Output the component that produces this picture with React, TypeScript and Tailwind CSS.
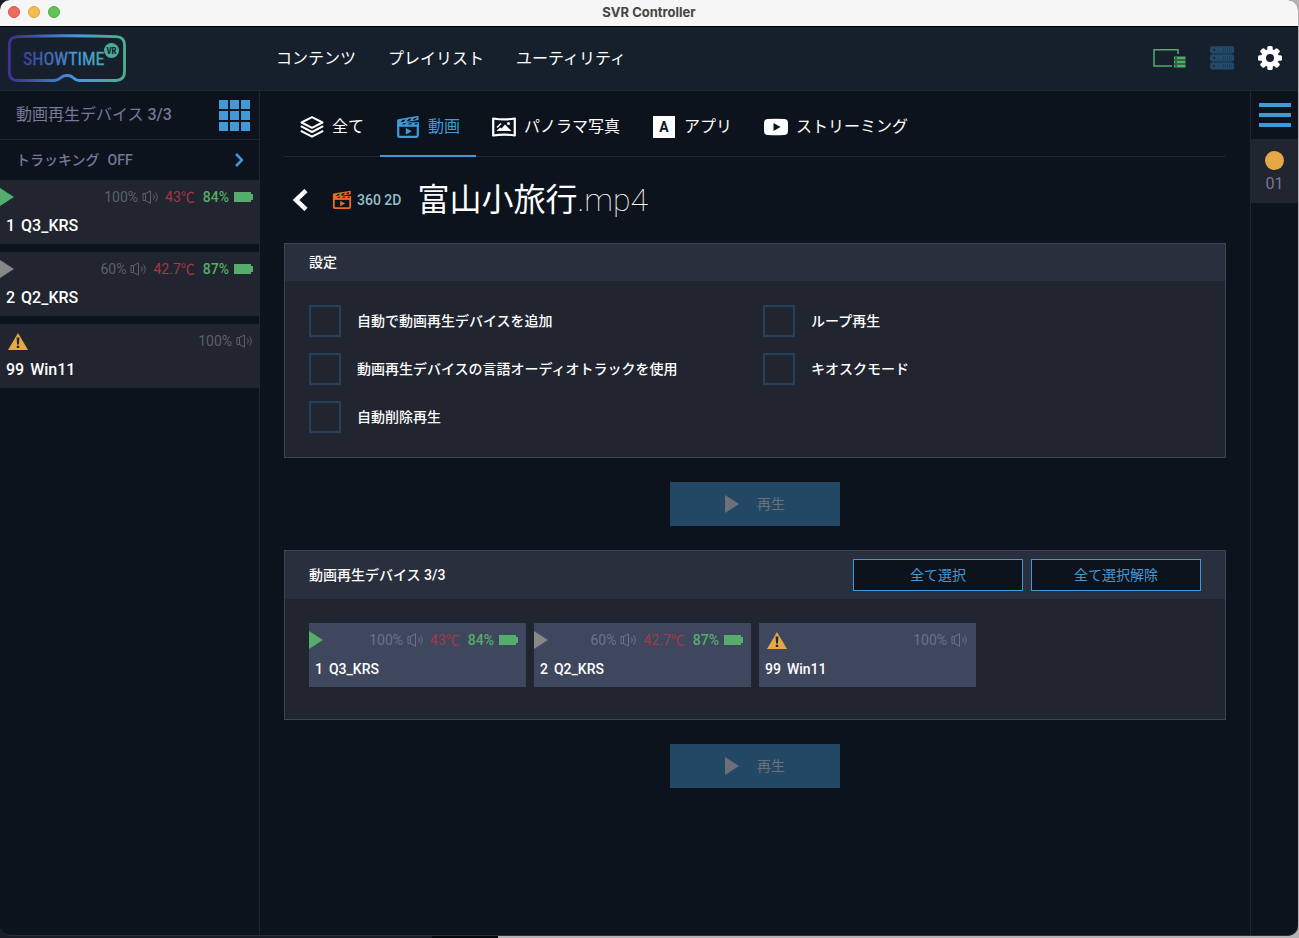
import { ReactNode } from "react";
import { clsx } from "clsx";

type IconProps = { className?: string };

const Logo = () => (
  <svg viewBox="0 0 120 50" className="h-[50px] w-[120px]" role="img" aria-label="Showtime VR">
    <defs>
      <linearGradient id="logo" gradientUnits="userSpaceOnUse" x1="0" y1="0" x2="120" y2="0">
        <stop offset="0" stopColor="#3f2f92" />
        <stop offset="0.16" stopColor="#41439f" />
        <stop offset="0.6" stopColor="#479bdb" />
        <stop offset="0.85" stopColor="#4ba99b" />
        <stop offset="1" stopColor="#4fb08c" />
      </linearGradient>
    </defs>
    <path
      d="M12 2.700 Q60 .8 110 2.700 Q118.500 3 118.500 11 V38 Q118.500 46 110 46.500 H73 C67 46.500 68 41.500 62 41.500 H60 C54 41.500 55 46.500 48 46.500 H12 Q3.300 46.500 3.300 38 V11 Q3.300 3 12 2.700 Z"
      fill="none"
      stroke="url(#logo)"
      strokeWidth="2.800"
      strokeLinejoin="round"
    />
    <text
      x="17"
      y="31"
      fontSize="18"
      fill="url(#logo)"
      stroke="url(#logo)"
      strokeWidth="0.3"
      className="font-['Roboto_Condensed','Liberation_Sans_Narrow',sans-serif]"
    >
      SHOWTIME
    </text>
    <circle cx="105.500" cy="16.500" r="7.500" fill="url(#logo)" />
    <text
      x="105.500"
      y="20"
      fontSize="9"
      textAnchor="middle"
      fill="#161f2c"
      className="font-['Roboto_Condensed','Liberation_Sans_Narrow',sans-serif] font-bold"
    >
      VR
    </text>
  </svg>
);

const LayersIcon = () => (
  <svg viewBox="0 0 24 24" className="size-6" fill="none" stroke="currentColor" strokeWidth="2" strokeLinejoin="round">
    <path d="M12 2.200 22.500 7.500 12 12.800 1.500 7.500Z" />
    <path d="M.8 11.200 12 17 23.200 11.200M.8 15.800 12 21.700 23.200 15.800" />
  </svg>
);

const ClapperIcon = ({ className }: IconProps) => (
  <svg viewBox="0 0 24 24" className={className}>
    <path
      d="M2.200 10.500H21.800V20.500Q21.800 21.800 20.500 21.800H3.500Q2.200 21.800 2.200 20.500Z"
      fill="none"
      stroke="currentColor"
      strokeWidth="2.200"
    />
    <path
      d="M1.100 5.500Q1.100 4.500 2 4.300L22.500 .8V5L9 7.300H22.900V11.500H1.100ZM6.500 5 4.500 7.300 7.800 6.700 9.800 4.400ZM12.500 4 10.500 6.200 13.800 5.700 15.800 3.400ZM18.300 3 16.500 5.100 19.600 4.600 21.200 2.500ZM7 8.200 5.500 10.500H8.700L10.200 8.200ZM13 8.200 11.500 10.500H14.700L16.200 8.200ZM19 8.200 17.500 10.500H20.700L21.800 8.200Z"
      fill="currentColor"
      fillRule="evenodd"
    />
    <path d="M9.800 13 15.800 16.300 9.800 19.600Z" fill="currentColor" />
  </svg>
);

const PhotoIcon = () => (
  <svg viewBox="0 0 24 24" className="size-6">
    <path
      d="M1.200 3.500Q12 5.200 22.800 3.500V20.500Q12 18.800 1.200 20.500Z"
      fill="none"
      stroke="currentColor"
      strokeWidth="2.200"
      strokeLinejoin="round"
    />
    <path d="M4.500 16 8 12.500 9.500 13.500 13 9.500 19.500 16Z" fill="currentColor" />
    <path d="M5 12.500 9 8.500" stroke="currentColor" strokeWidth="1.500" />
    <circle cx="16.500" cy="8.500" r="1.500" fill="currentColor" />
  </svg>
);

const AppIcon = () => (
  <span className="flex size-6 items-center justify-center">
    <span className="flex size-[22px] items-center justify-center bg-white text-sm leading-4 font-bold text-[#0c131c]">
      A
    </span>
  </span>
);

const StreamIcon = () => (
  <svg viewBox="0 0 24 24" className="size-6">
    <path
      fill="currentColor"
      fillRule="evenodd"
      d="M4 4Q12 3.400 20 4Q24 4.200 24 8V16Q24 19.800 20 20Q12 20.600 4 20Q0 19.800 0 16V8Q0 4.200 4 4ZM9.500 8V16L16.500 12Z"
    />
  </svg>
);

const PlayIcon = ({ className }: IconProps) => (
  <svg viewBox="0 0 14 18" className={clsx("h-[18px] w-[14px]", className)}>
    <path d="M0 0 14 9 0 18Z" fill="currentColor" />
  </svg>
);

const WarningIcon = () => (
  <svg viewBox="0 0 20 17" className="ml-2 h-[17px] w-5">
    <path d="M10 0 20 17H0Z" fill="#e5a847" />
    <path d="M8.600 4.500H11.400L10.900 11.500H9.100ZM8.800 12.700H11.200V15H8.800Z" fill="#20252f" />
  </svg>
);

const SpeakerIcon = () => (
  <svg viewBox="0 0 17 14" className="ml-1 h-[14px] w-[17px]" fill="none" stroke="currentColor">
    <path d="M1 3.500H3.500V10.500H1ZM3.500 3.500 8.500 .8V13.200L3.500 10.500" />
    <path d="M11.500 4.500Q13.200 7 11.500 9.500M13.500 2.500Q17 7 13.500 11.500" />
  </svg>
);

const BatteryIcon = () => (
  <svg viewBox="0 0 19 10" className="ml-[5px] h-[10px] w-[19px]">
    <path d="M0 0H17V2H19V8H17V10H0Z" fill="currentColor" />
  </svg>
);

const GridIcon = () => (
  <span className="grid grid-cols-3 gap-[2px]">
    {Array.from({ length: 9 }, (_, i) => (
      <span key={i} className="size-[9px] bg-[#4299d8]" />
    ))}
  </span>
);

const ScreenIcon = () => (
  <svg viewBox="0 0 33 24" className="h-6 w-[33px]" stroke="#4fae68" fill="none">
    <path d="M25 8V3.700H1V20H19" strokeWidth="1.500" />
    <path d="M21 10.500H32.500V13.500H21ZM21 14.500H32.500V17.500H21ZM21 18.500H32.500V21.500H21Z" fill="#4fae68" stroke="none" />
    <path d="M22 12H24M22 16H24M22 20H24" stroke="#161f2c" />
  </svg>
);

const ServerIcon = () => (
  <svg viewBox="0 0 24 24" className="size-6">
    {[0, 8, 16].map((y) => (
      <g key={y}>
        <rect y={y + 0.3} width="24" height="7.200" rx="2" fill="#244a6b" />
        <circle cx="4" cy={y + 4} r="1" fill="#161f2c" />
        <path d={`M13 ${y + 4}H22`} stroke="#1d3a56" strokeWidth="3" strokeDasharray="1 1" />
      </g>
    ))}
  </svg>
);

const GearIcon = () => (
  <svg viewBox="0 0 24 24" className="size-6">
    <circle cx="12" cy="12" r="6.500" fill="none" stroke="#fff" strokeWidth="5" />
    {[0, 45, 90, 135].map((deg) => (
      <g key={deg} transform={`rotate(${deg} 12 12)`} fill="#fff">
        <rect x="9.300" width="5.400" height="6" rx="1.500" />
        <rect x="9.300" y="18" width="5.400" height="6" rx="1.500" />
      </g>
    ))}
  </svg>
);

type Device = {
  id: number;
  name: string;
  volume: string;
  status: "playing" | "idle" | "warning";
  temperature?: string;
  battery?: string;
};

const devices: Device[] = [
  { id: 1, name: "Q3_KRS", volume: "100%", status: "playing", temperature: "43℃", battery: "84%" },
  { id: 2, name: "Q2_KRS", volume: "60%", status: "idle", temperature: "42.7℃", battery: "87%" },
  { id: 99, name: "Win11", volume: "100%", status: "warning" },
];

const DeviceTile = ({ device, card }: { device: Device; card?: boolean }) => (
  <li className={clsx("pt-1 pb-1.5", card ? "bg-[#3e475d]" : "bg-[#20252f]")}>
    <div className={clsx("flex h-[26px] items-center text-sm", card ? "pr-2" : "pr-1.5")}>
      {device.status === "warning" ? (
        <WarningIcon />
      ) : (
        <PlayIcon className={device.status === "playing" ? "text-[#54ad6a]" : "text-[#878787]"} />
      )}
      <span className={clsx("ml-auto flex items-center", card ? "text-[#6e7486]" : "text-[#5c606b]")}>
        {device.volume}
        <SpeakerIcon />
      </span>
      {device.temperature && <span className="ml-1.5 text-[#a83645]">{device.temperature}</span>}
      {device.battery && (
        <span className="ml-2 flex items-center font-medium text-[#54ad6a]">
          {device.battery}
          <BatteryIcon />
        </span>
      )}
    </div>
    <div className={clsx("mt-1 flex gap-1.5 pl-1.5 font-medium", card ? "text-sm leading-6" : "text-base leading-6")}>
      <span>{device.id}</span>
      <span>{device.name}</span>
    </div>
  </li>
);

const Sidebar = () => (
  <aside className="w-[260px] shrink-0 border-r border-[#20262f]">
    <div className="flex h-[49px] items-center justify-between border-b border-[#20262f] pr-[9px] pl-4 text-[#77779a]">
      <h2>
        動画再生デバイス <span className="font-medium">3/3</span>
      </h2>
      <button aria-label="グリッド表示">
        <GridIcon />
      </button>
    </div>
    <button className="flex h-10 w-full items-center justify-between px-4 text-sm font-medium text-[#77779a]">
      <span className="flex gap-2">
        <span>トラッキング</span>
        <span>OFF</span>
      </span>
      <svg viewBox="0 0 8 14" className="h-[14px] w-2" fill="none" stroke="#4299d8" strokeWidth="2.500">
        <path d="M1 1 7 7 1 13" />
      </svg>
    </button>
    <ul className="space-y-2">
      {devices.map((device) => (
        <DeviceTile key={device.id} device={device} />
      ))}
    </ul>
  </aside>
);

type TabProps = { icon: ReactNode; label: string; active?: boolean };

const Tab = ({ icon, label, active }: TabProps) => (
  <button
    role="tab"
    aria-selected={!!active}
    className={clsx(
      "-mb-px flex items-center gap-2 border-b-2 p-4",
      active ? "border-[#4299d8] text-[#4299d8]" : "border-transparent",
    )}
  >
    {icon}
    {label}
  </button>
);

const Option = ({ label }: { label: string }) => (
  <label className="flex items-center gap-4 text-sm font-medium">
    <input type="checkbox" className="size-8 shrink-0 appearance-none border-2 border-[#273f58] checked:bg-[#4299d8]" />
    {label}
  </label>
);

const PlayButton = () => (
  <button
    disabled
    className="mx-auto my-6 flex h-11 w-[170px] items-center justify-center gap-[18px] bg-[#224866] text-sm text-[#6c7078]"
  >
    <PlayIcon />
    再生
  </button>
);

const SelectButton = ({ label }: { label: string }) => (
  <button className="h-8 w-[170px] border border-[#4299d8] bg-[#0c131c] text-sm text-[#4299d8]">{label}</button>
);

const Main = () => (
  <main className="min-w-0 flex-1 px-6 pt-2">
    <div role="tablist" className="flex border-b border-[#20262f]">
      <Tab icon={<LayersIcon />} label="全て" />
      <Tab icon={<ClapperIcon className="size-6" />} label="動画" active />
      <Tab icon={<PhotoIcon />} label="パノラマ写真" />
      <Tab icon={<AppIcon />} label="アプリ" />
      <Tab icon={<StreamIcon />} label="ストリーミング" />
    </div>

    <div className="flex items-center py-[19px] pl-2">
      <button aria-label="戻る">
        <svg viewBox="0 0 16 22" className="h-[22px] w-4" fill="none" stroke="#fff" strokeWidth="4.500">
          <path d="M14 1.500 4 11 14 20.500" />
        </svg>
      </button>
      <ClapperIcon className="ml-6 size-5 text-[#e96b2b]" />
      <span className="ml-[5px] text-sm font-medium text-[#94bfcc]">360 2D</span>
      <h1 className="ml-4 text-[32px] leading-[48px]">
        富山小旅行<span className="font-thin">.mp4</span>
      </h1>
    </div>

    <section className="border border-[#3d4457] bg-[#20252f]">
      <h2 className="bg-[#2a2f3d] px-6 text-sm leading-[37px] font-medium">設定</h2>
      <div className="grid grid-cols-2 gap-4 p-6">
        <Option label="自動で動画再生デバイスを追加" />
        <Option label="ループ再生" />
        <Option label="動画再生デバイスの言語オーディオトラックを使用" />
        <Option label="キオスクモード" />
        <Option label="自動削除再生" />
      </div>
    </section>

    <PlayButton />

    <section className="border border-[#3d4457] bg-[#20252f]">
      <div className="flex items-center gap-2 bg-[#2a2f3d] px-6 py-2">
        <h2 className="mr-auto text-sm font-medium">動画再生デバイス 3/3</h2>
        <SelectButton label="全て選択" />
        <SelectButton label="全て選択解除" />
      </div>
      <ul className="grid grid-cols-4 gap-2 px-6 pt-6 pb-8">
        {devices.map((device) => (
          <DeviceTile key={device.id} device={device} card />
        ))}
      </ul>
    </section>

    <PlayButton />
  </main>
);

const RightBar = () => (
  <aside className="w-12 shrink-0 border-l border-[#20262f]">
    <button aria-label="メニュー" className="flex h-12 w-full flex-col items-center justify-center gap-1.5">
      <span className="h-1 w-8 bg-[#4299d8]" />
      <span className="h-1 w-8 bg-[#4299d8]" />
      <span className="h-1 w-8 bg-[#4299d8]" />
    </button>
    <button className="flex h-16 w-full flex-col items-center gap-0.5 bg-[#20252f] pt-3 text-base text-[#77779a]">
      <span className="size-[19px] shrink-0 rounded-full bg-[#e5a847]" />
      01
    </button>
  </aside>
);

const App = () => {
  return (
    <div className="flex min-h-screen flex-col bg-[linear-gradient(90deg,#1b1c27_432px,#05060c_432px_498px,#b5b2b3_498px)] pr-px pb-[2px] font-['Roboto','Noto_Sans_CJK_JP',sans-serif] text-base text-white">
      <div className="flex flex-1 flex-col overflow-hidden rounded-[10px] border-b border-[#2b3039] bg-[#0c131c]">
        <div className="grid h-[27px] grid-cols-3 items-center border-b border-black bg-[#f6f6f6] px-2">
          <div className="flex gap-2 pb-[2px]">
            <span className="size-3 rounded-full border border-[#d85549] bg-[#ed6a5e]" />
            <span className="size-3 rounded-full border border-[#dba03a] bg-[#f4be4f]" />
            <span className="size-3 rounded-full border border-[#50a73f] bg-[#61c554]" />
          </div>
          <div className="pb-[3px] text-center font-['Inter',sans-serif] text-[13px] leading-5 font-bold text-[#454545]">
            SVR Controller
          </div>
        </div>

        <header className="flex h-16 items-center border-b border-[#20262f] bg-[#161f2c] pr-4 pl-1.5">
          <Logo />
          <nav className="ml-[150px] flex gap-8">
            <a href="#contents">コンテンツ</a>
            <a href="#playlist">プレイリスト</a>
            <a href="#utility">ユーティリティ</a>
          </nav>
          <div className="ml-auto flex gap-6 pb-[2px]">
            <button aria-label="画面">
              <ScreenIcon />
            </button>
            <button aria-label="サーバー">
              <ServerIcon />
            </button>
            <button aria-label="設定">
              <GearIcon />
            </button>
          </div>
        </header>

        <div className="flex flex-1">
          <Sidebar />
          <Main />
          <RightBar />
        </div>
      </div>
    </div>
  );
};

export default App;
